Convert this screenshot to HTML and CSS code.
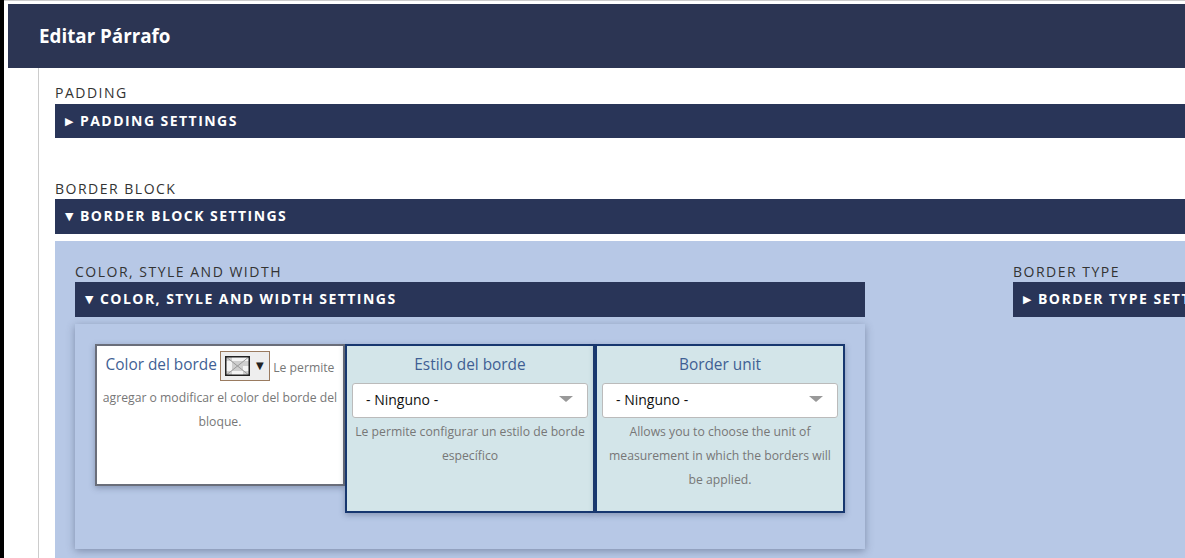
FILE: index.html
```html
<!DOCTYPE html>
<html lang="es">
<head>
    <meta charset="UTF-8">
    <title>Editar Párrafo</title>
    <link rel="stylesheet" href="styles.css">
</head>
<body>
    <div class="page">
        <h1 class="page-title">Editar Párrafo</h1>
        <div class="form-body">

            <div class="field-group group-padding">
                <div class="group-label">Padding</div>
                <details class="group">
                    <summary class="group-bar"><span class="marker">▶</span>Padding settings</summary>
                </details>
            </div>

            <div class="field-group">
                <div class="group-label group-label-border">Border block</div>
                <details class="group" open>
                    <summary class="group-bar tall"><span class="marker">▼</span>Border block settings</summary>
                    <div class="outer-panel">
                        <div class="columns">

                            <div class="field-group">
                                <div class="group-label">Color, style and width</div>
                                <details class="group" open>
                                    <summary class="group-bar tall"><span class="marker">▼</span>Color, style and width settings</summary>
                                    <div class="inner-panel">
                                        <div class="card card-white">
                                            <div class="help-text">
                                                <span class="card-title">Color del borde</span>
                                                <span class="swatch">
                                                    <svg class="swatch-box" width="25" height="20" viewBox="0 0 25 20">
                                                        <rect width="25" height="20" fill="#f4f4f4"/>
                                                        <path d="M0 0h7v5H0zM18 5h7v5h-7zM7 5h11v10H7zM0 15h7v5H0zM18 15h7v5h-7z" fill="#cfcfcf"/>
                                                        <path d="M0 0L25 20M25 0L0 20" stroke="#999" stroke-width="1"/>
                                                        <rect x=".75" y=".75" width="23.5" height="18.5" fill="none" stroke="#222" stroke-width="1.5"/>
                                                    </svg>
                                                    <span class="swatch-arrow">▼</span>
                                                </span>
                                                Le permite agregar o modificar el color del borde del bloque.
                                            </div>
                                        </div>
                                        <div class="card">
                                            <div class="card-title">Estilo del borde</div>
                                            <div class="select-wrap">
                                                <select class="select"><option>- Ninguno -</option></select>
                                            </div>
                                            <div class="help-text">Le permite configurar un estilo de borde específico</div>
                                        </div>
                                        <div class="card">
                                            <div class="card-title">Border unit</div>
                                            <div class="select-wrap">
                                                <select class="select"><option>- Ninguno -</option></select>
                                            </div>
                                            <div class="help-text">Allows you to choose the unit of measurement in which the borders will be applied.</div>
                                        </div>
                                    </div>
                                </details>
                            </div>

                            <div class="field-group">
                                <div class="group-label">Border type</div>
                                <details class="group">
                                    <summary class="group-bar tall"><span class="marker">▶</span>Border type settings</summary>
                                </details>
                            </div>

                        </div>
                    </div>
                </details>
            </div>

        </div>
    </div>
</body>
</html>
```

FILE: styles.css
```css
html, body {
    margin: 0;
    height: 100%;
    overflow: hidden;
}

body {
    font-family: "Open Sans", "Noto Sans", sans-serif;
    background: #fff;
}

.page {
    height: 100%;
    box-sizing: border-box;
    border-left: 4px solid #000;
    padding: 4px 0 0 4px;
    box-shadow: inset 0 1px 0 #ccc;
    overflow: hidden;
}

.page-title {
    margin: 0;
    height: 64px;
    line-height: 64px;
    padding-left: 31px;
    background: #2c3553;
    color: #fff;
    font-size: 18.8px;
    font-weight: 700;
}

.form-body {
    margin-left: 30px;
    border-left: 1px solid #ccc;
    padding-left: 16px;
    padding-top: 15px;
    height: 600px;
}

.group-padding {
    margin-bottom: 41px;
}

.group-label {
    height: 21px;
    line-height: 20px;
    font-size: 14px;
    letter-spacing: 1.5px;
    text-transform: uppercase;
    color: #333;
    white-space: nowrap;
}

.group-label-border {
    height: 20px;
}

.outer-panel .group-label {
    line-height: 21px;
}

.group-bar {
    display: block;
    list-style: none;
    height: 34px;
    line-height: 34px;
    padding-left: 10px;
    background: #293558;
    color: #fff;
    font-size: 14px;
    font-weight: 700;
    letter-spacing: 1.45px;
    text-transform: uppercase;
    white-space: nowrap;
}

.group-bar.tall {
    height: 35px;
}

.marker {
    display: inline-block;
    width: 15px;
    font-family: "DejaVu Sans", sans-serif;
    font-size: 11px;
    letter-spacing: 0;
    vertical-align: 1px;
}

.outer-panel {
    margin-top: 7px;
    padding: 20px;
    height: 600px;
    background: #b7c8e6;
}

.columns {
    display: grid;
    grid-template-columns: 790px 790px;
    column-gap: 148px;
}

.inner-panel {
    display: flex;
    align-items: flex-start;
    margin-top: 7px;
    padding: 20px 20px 36px;
    background: #b7c8e6;
    box-shadow: 0 2px 8px rgba(60, 70, 100, .45);
}

.card {
    width: 250px;
    height: 169px;
    box-sizing: border-box;
    padding: 1px 5px 0;
    background: #d3e5e9;
    border: 2px solid #17376f;
    text-align: center;
    box-shadow: 0 2px 6px rgba(60, 70, 100, .4);
}

.card-white {
    height: 142px;
    padding-top: 0;
    background: #fff;
    border-color: #6a6e7a;
}

.card-title {
    font-size: 15.4px;
    line-height: 35px;
    color: #3f5f94;
}

.card-white .card-title {
    vertical-align: 2px;
}

.select-wrap {
    position: relative;
    margin-top: 1px;
}

.select-wrap::after {
    content: "";
    position: absolute;
    top: 13px;
    right: 15px;
    border-style: solid;
    border-width: 6px 7px 0;
    border-color: #999 transparent transparent;
}

.select {
    display: block;
    width: 100%;
    height: 35px;
    padding: 0 13px 3px;
    appearance: none;
    background: #fff;
    border: 1px solid #bbb;
    border-radius: 3px;
    font-family: inherit;
    font-size: 14px;
    color: #111;
}

.help-text {
    margin-top: 2px;
    font-size: 12.2px;
    line-height: 24px;
    color: #777;
}

.card-white .help-text {
    margin-top: 1px;
}

.swatch {
    display: inline-flex;
    align-items: center;
    box-sizing: border-box;
    width: 50px;
    height: 30px;
    margin-bottom: 5px;
    padding-left: 4px;
    vertical-align: middle;
    background: #eee;
    border: 1px solid #9a7b60;
}

.swatch-box {
    display: block;
}

.swatch-arrow {
    margin-left: 6px;
    font-family: "DejaVu Sans", sans-serif;
    font-size: 10px;
    color: #222;
}
```
